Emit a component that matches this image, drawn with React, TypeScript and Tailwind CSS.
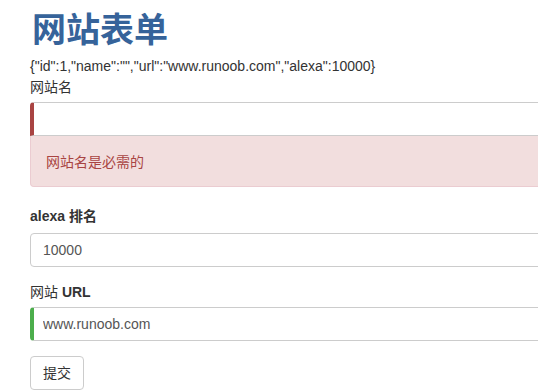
import React from 'react';

const font = { fontFamily: '"Liberation Sans", "Noto Sans CJK SC", sans-serif' };

export default function App() {
  return (
    <div className="w-[538px] h-[392px] overflow-hidden bg-white text-[#333]" style={font}>
      <div className="w-[620px] pl-[30px]">
        <h1 className="pt-[10px] pl-[2px] text-[34px] leading-[40px] font-semibold text-[#36639a]">网站表单</h1>
        <p className="text-[14px] leading-[20px] mt-[6px]">{'{"id":1,"name":"","url":"www.runoob.com","alexa":10000}'}</p>

        <label className="block text-[14px] leading-[20px] mt-[1px]">网站名</label>
        <input
          className="block mt-[5px] w-full h-[34px] border border-[#ccc] border-l-4 border-l-[#a94442] rounded-t-[4px] pl-[9px] text-[14px] outline-none"
          defaultValue=""
        />
        <div className="border border-t-0 border-[#ebccd1] bg-[#f2dede] text-[#a94442] text-[14px] leading-[20px] px-[15px] pt-[16px] pb-[14px] rounded-b-[4px]">
          网站名是必需的
        </div>

        <label className="block mt-[19px] text-[14px] leading-[20px] font-bold">alexa 排名</label>
        <input
          className="block mt-[7px] w-full h-[34px] border border-[#ccc] rounded-[4px] pl-[12px] text-[14px] text-[#555] outline-none"
          defaultValue="10000"
        />

        <label className="block mt-[15px] text-[14px] leading-[20px]">
          网站 <span className="font-bold">URL</span>
        </label>
        <input
          className="block mt-[5px] w-full h-[34px] border border-[#ccc] border-l-4 border-l-[#4cae4c] rounded-[4px] pl-[9px] text-[14px] text-[#555] outline-none"
          defaultValue="www.runoob.com"
        />

        <button className="mt-[15px] h-[34px] px-[12px] border border-[#ccc] rounded-[4px] bg-white text-[14px] text-[#333]">
          提交
        </button>
      </div>
    </div>
  );
}
